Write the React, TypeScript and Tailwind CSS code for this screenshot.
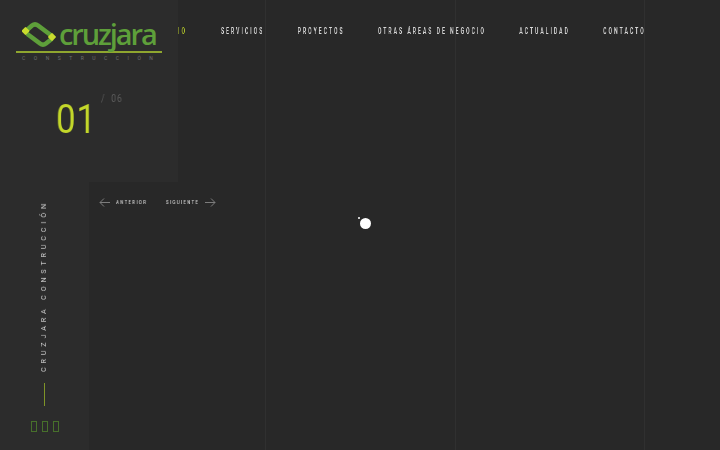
const navItems = ['SERVICIOS', 'PROYECTOS', 'OTRAS ÁREAS DE NEGOCIO', 'ACTUALIDAD', 'CONTACTO'];

const narrow = "font-['Roboto',sans-serif]";

function LogoMark() {
  return (
    <svg width="34" height="27" viewBox="0 0 34 27" className="shrink-0">
      <path
        d="M5 9 L10 4.5 Q13 2.2 16 4.5 L28 13.5"
        fill="none"
        stroke="#5e9f3a"
        strokeWidth="4.6"
        strokeLinecap="round"
      />
      <path
        d="M6 13.5 L18 22.5 Q21 24.8 24 22.5 L29 18.5"
        fill="none"
        stroke="#5e9f3a"
        strokeWidth="4.6"
        strokeLinecap="round"
      />
      <rect x="0.5" y="7" width="6" height="6" rx="1" transform="rotate(45 3.5 10)" fill="#c9dc2e" />
      <rect x="27" y="13" width="6" height="6" rx="1" transform="rotate(45 30 16)" fill="#c9dc2e" />
    </svg>
  );
}

function LongArrow({ flip }: { flip?: boolean }) {
  return (
    <svg width="11" height="9" viewBox="0 0 11 9" className={flip ? 'shrink-0 rotate-180' : 'shrink-0'}>
      <path d="M11 4.5H1M5 .5l-4 4 4 4" fill="none" stroke="#7c7c7c" strokeWidth="1" />
    </svg>
  );
}

export default function App() {
  return (
    <div className="relative flex h-[450px] w-[720px] flex-col overflow-hidden bg-[#282828] font-['Liberation_Sans',sans-serif]">
      {/* column guides */}
      <div className="pointer-events-none absolute inset-0 flex pl-[265px]">
        <div className="w-[190px] border-l border-[#303030]" />
        <div className="w-[189px] border-l border-[#303030]" />
        <div className="border-l border-[#303030]" />
      </div>

      <div className="relative flex h-[182px] shrink-0">
        <div className="flex w-[178px] shrink-0 flex-col bg-[#2c2c2c] pt-[21px]">
          <div className="ml-[16px] w-[146px]">
            <div className="flex h-[30px] items-start pl-[6px]">
              <LogoMark />
              <span className="ml-[3px] mt-[-1px] font-['Open_Sans',sans-serif] text-[29px] font-semibold leading-[28px] tracking-[-2.1px] text-[#5e9f3a]">
                cruzjara
              </span>
            </div>
            <div className="h-[2px] bg-[#8fa62f]" />
            <div className={`${narrow} mt-[2px] whitespace-nowrap pl-[6px] text-[5px] leading-[7px] tracking-[8.5px] text-[#6f6f6f]`}>
              CONSTRUCCIÓN
            </div>
          </div>
          <div className="relative mt-[33px] flex pl-[56px]">
            <span className={`${narrow} origin-left scale-x-[0.85] text-[41px] leading-[48px] tracking-[1px] text-[#c3d72a] will-change-transform`}>01</span>
            <span className={`${narrow} ml-[-3px] mt-[-2px] origin-left scale-x-[0.85] text-[10px] leading-[12px] tracking-[1px] text-[#5c5c5c] will-change-transform`}>
              /&nbsp;&nbsp;06
            </span>
          </div>
        </div>

        <nav className={`${narrow} flex h-[64px] flex-1 items-center overflow-hidden text-[9px] font-semibold tracking-[3.55px] text-[#d8d8d8]`}>
          <div className="flex origin-left scale-x-[0.565] items-center gap-[59px] whitespace-nowrap will-change-transform">
            <span className="w-[17px] text-[#a9bb2b]">IO</span>
            {navItems.map((item) => (
              <span key={item}>{item}</span>
            ))}
          </div>
        </nav>
      </div>

      <div className="relative flex flex-1">
        <aside className="flex w-[89px] shrink-0 flex-col items-center bg-[#2c2c2c] pt-[18px]">
          <span className={`${narrow} rotate-180 text-[7px] leading-none tracking-[3.95px] text-[#cfcfcf] will-change-transform [writing-mode:vertical-rl]`}>
            CRUZJARA CONSTRUCCIÓN
          </span>
          <div className="mt-[11px] h-[23px] w-px bg-[#7f9428]" />
          <div className="mt-[15px] flex gap-[5px]">
            <span className="h-[11px] w-[6px] border border-[#47702b]" />
            <span className="h-[11px] w-[6px] border border-[#47702b]" />
            <span className="h-[11px] w-[6px] border border-[#47702b]" />
          </div>
        </aside>

        <div className={`${narrow} flex h-[41px] items-center whitespace-nowrap pl-[10px] text-[5.5px] font-medium tracking-[1.6px] text-[#cfcfcf]`}>
          <LongArrow />
          <span className="ml-[6px] w-[50px] origin-left scale-x-[0.8] will-change-transform">ANTERIOR</span>
          <span className="w-[39px] origin-left scale-x-[0.8] will-change-transform">SIGUIENTE</span>
          <LongArrow flip />
        </div>
      </div>

      {/* preloader */}
      <div className="absolute left-[360px] top-[218px] h-[11px] w-[11px] rounded-full bg-white" />
      <div className="absolute left-[358px] top-[217px] h-[2px] w-[2px] rounded-full bg-white" />
    </div>
  );
}
